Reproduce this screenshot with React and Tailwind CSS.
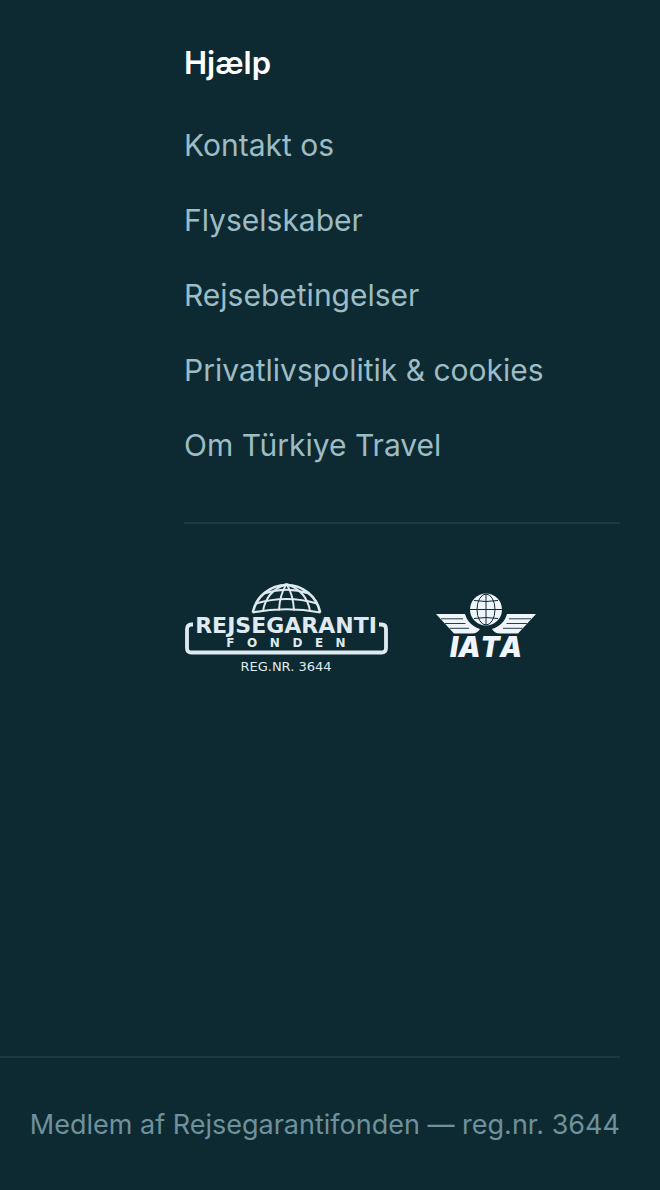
const helpLinks = [
  'Kontakt os',
  'Flyselskaber',
  'Rejsebetingelser',
  'Privatlivspolitik & cookies',
  'Om Türkiye Travel',
];

function RejsegarantiLogo() {
  return (
    <svg
      className="w-51 shrink-0 text-[#dfeaf0]"
      viewBox="0 0 204 94"
      fill="none"
      role="img"
      aria-label="Rejsegarantifonden reg.nr. 3644"
    >
      {/* Half globe */}
      <g stroke="currentColor" strokeWidth="1.9">
        <path d="M68.800 31.500A34.400 34.400 0 0 1 136.200 31.500" strokeWidth="2.600" />
        <path d="M68.500 31.500Q102.500 25 136.500 31.500" strokeWidth="2.200" />
        <path d="M72 22.500Q102.500 13.500 133 22.500" />
        <path d="M80 12.500Q102.500 5 125 12.500" />
        <path d="M102.500 3C88 8 81 18 79 30" />
        <path d="M102.500 3C98 10 95.500 19 95 29.500" />
        <path d="M102.500 3C107 10 109.500 19 110 29.500" />
        <path d="M102.500 3C117 8 124 18 126 30" />
      </g>

      {/* Frame around the name */}
      <path
        d="M9 43.500H7.500Q3 43.500 3 48V67Q3 71.500 7.500 71.500H197.500Q202 71.500 202 67V48Q202 43.500 197.500 43.500H195"
        stroke="currentColor"
        strokeWidth="3.800"
      />

      <g fill="currentColor" textAnchor="middle" className="font-['DejaVu_Sans',sans-serif]">
        <text x="102" y="52" className="text-[22px] font-bold">REJSEGARANTI</text>
        <text x="102" y="66" className="text-[12px] font-bold whitespace-pre">F   O   N   D   E   N</text>
        <text x="102" y="90" className="text-[13px]">REG.NR. 3644</text>
      </g>
    </svg>
  );
}

function IataWing() {
  return (
    <>
      <path d="M0 20H29C31 27 36 32.500 44 35C42.500 37.500 40 39.500 36 39.500H18Z" fill="#f0f5fc" />
      <path d="M5 24.800H27M9 29.500H29.500M13.500 34.300H33" stroke="#0d2a32" strokeWidth="0.900" />
    </>
  );
}

function IataLogo() {
  return (
    <svg className="w-[101px] shrink-0" viewBox="0 -4 101 76" fill="none" role="img" aria-label="IATA">
      <IataWing />
      <g transform="matrix(-1 0 0 1 100 0)">
        <IataWing />
      </g>

      <circle cx="50" cy="15.500" r="16" fill="#f0f5fc" />
      <g stroke="#0d2a32" strokeWidth="1">
        <path d="M50 0V31M34 15.500H66M38 6.500Q50 8.500 62 6.500M38 24.500Q50 22.500 62 24.500" />
        <ellipse cx="50" cy="15.500" rx="9" ry="15.500" />
      </g>

      <text
        x="50"
        y="63"
        textAnchor="middle"
        fill="#f0f5fc"
        className="font-['Inter',sans-serif] text-[28px] font-black italic [font-kerning:none]"
      >
        IATA
      </text>
    </svg>
  );
}

export default function App() {
  return (
    <footer className="flex min-h-screen flex-col bg-[#0d2a32] font-['Inter',sans-serif]">
      <div className="pt-10 pr-10 pl-46">
        <h2 className="text-[31px] leading-[46px] font-semibold text-white">Hjælp</h2>

        <nav aria-label="Hjælp" className="mt-[38px]">
          <ul className="flex flex-col gap-8">
            {helpLinks.map((label) => (
              <li key={label} className="text-[30px] leading-[43px]">
                <a href="#" className="text-[#9dbcc4] hover:text-white">
                  {label}
                </a>
              </li>
            ))}
          </ul>
        </nav>

        {/* Memberships */}
        <div className="mt-[55px] flex items-center gap-12 border-t-2 border-[#1d3842] pt-[57px]">
          <RejsegarantiLogo />
          <IataLogo />
        </div>
      </div>

      <div className="mt-auto mr-10 border-t-2 border-[#1d3842] pt-[47px] pb-[45px]">
        <p className="text-right text-[27px] leading-10 text-[#6f919b]">
          Medlem af Rejsegarantifonden — reg.nr. 3644
        </p>
      </div>
    </footer>
  );
}
